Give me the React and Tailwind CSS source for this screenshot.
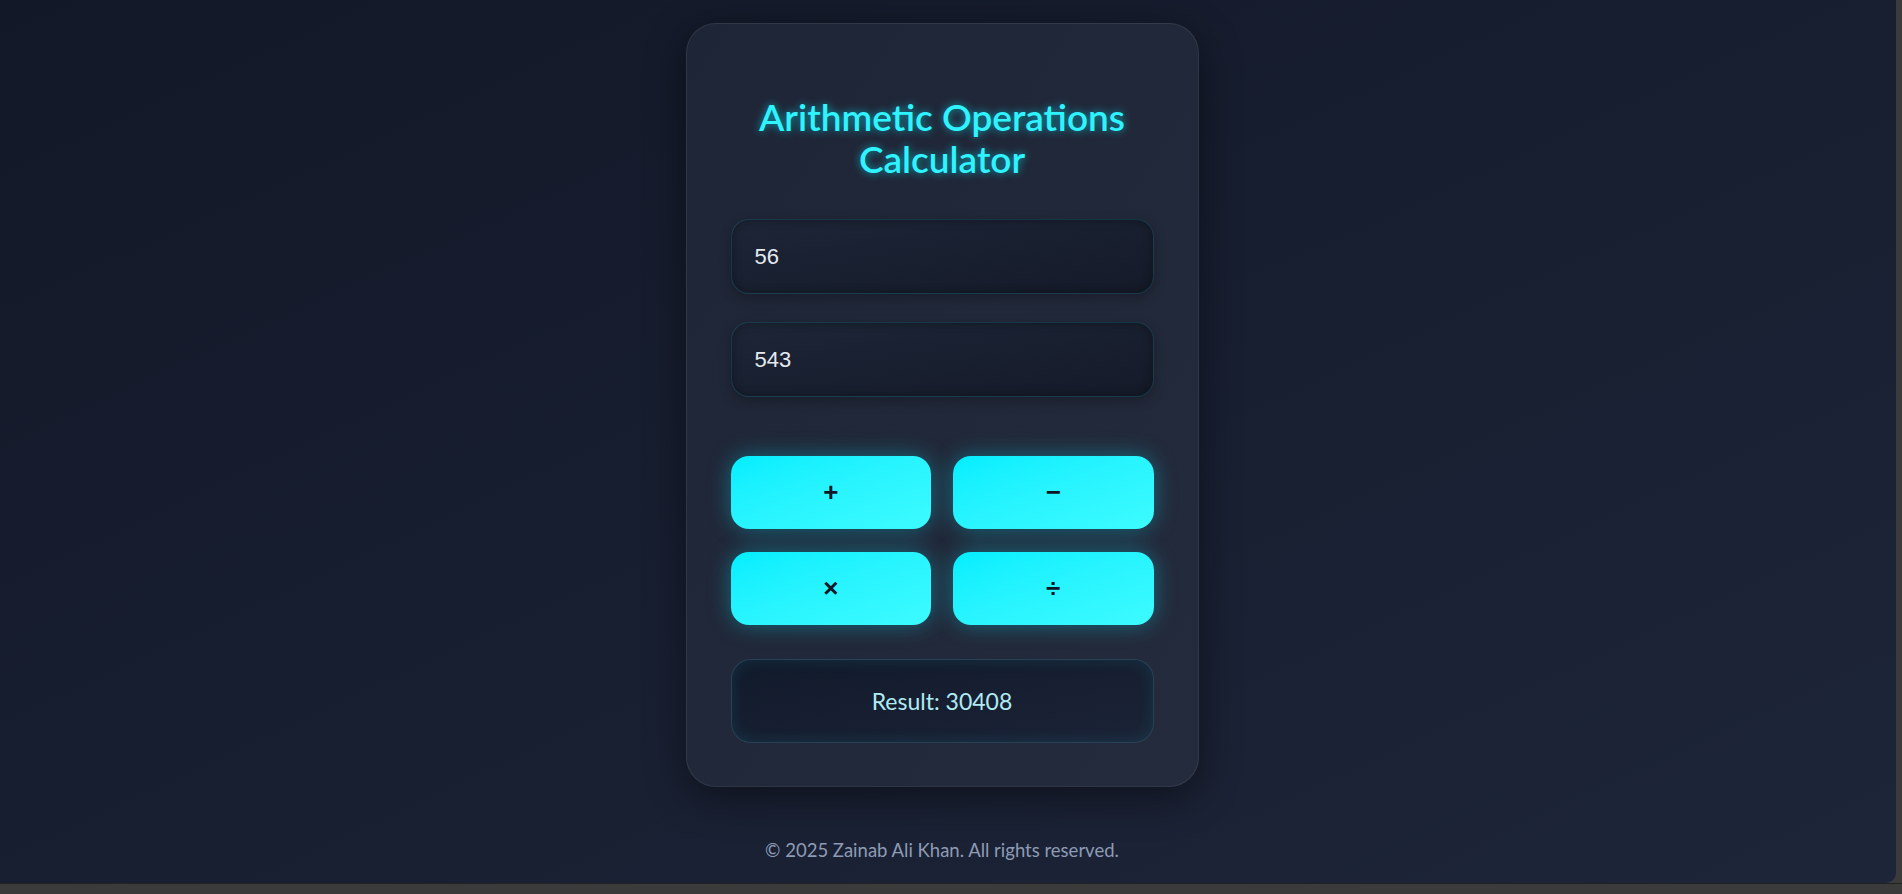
import React, { useState } from 'react';

const ops = [
  { key: 'add', label: '+', fn: (a, b) => a + b },
  { key: 'sub', label: '−', fn: (a, b) => a - b },
  { key: 'mul', label: '×', fn: (a, b) => a * b },
  { key: 'div', label: '÷', fn: (a, b) => (b === 0 ? 'Error' : a / b) },
];

function NumberField({ value, onChange }) {
  return (
    <input
      type="text"
      value={value}
      onChange={(e) => onChange(e.target.value)}
      className="w-full h-[75px] rounded-[18px] border border-[#22d3ee]/15 bg-gradient-to-br from-[#1d2537] to-[#141a28] pl-[23px] text-[22px] text-[#e5e9f0] font-['Liberation_Sans',Arial,sans-serif] outline-none shadow-[inset_0_0_10px_rgba(0,0,0,0.35),0_4px_12px_rgba(0,0,0,0.25)]"
    />
  );
}

export default function App() {
  const [a, setA] = useState('56');
  const [b, setB] = useState('543');
  const [result, setResult] = useState(30408);

  const run = (op) => {
    const x = parseFloat(a);
    const y = parseFloat(b);
    if (isNaN(x) || isNaN(y)) return setResult('Invalid');
    setResult(op.fn(x, y));
  };

  return (
    <div className="h-[894px] w-full bg-[#3b3b3b] overflow-hidden">
      <div className="h-[883px] w-[1896px] rounded-br-[10px] overflow-hidden bg-gradient-to-br from-[#121827] to-[#1d2539] font-['Lato','Noto_Sans',sans-serif]">
        <div className="flex flex-col items-center pr-[12px] pt-[23px]">
          <div className="w-[513px] h-[764px] rounded-[30px] border border-white/[0.07] bg-gradient-to-br from-[#1e2536] to-[#242b3c] px-[44px] pt-[72px] pb-[40px] shadow-[0_10px_40px_rgba(0,0,0,0.45)]">
            <h1 className="text-center text-[37px] leading-[42px] font-semibold text-[#2ff3ff] [text-shadow:0_0_8px_rgba(0,235,255,0.65)]">
              Arithmetic Operations
              <br />
              Calculator
            </h1>

            <div className="mt-[39px] flex flex-col gap-[28px]">
              <NumberField value={a} onChange={setA} />
              <NumberField value={b} onChange={setB} />
            </div>

            <div className="mt-[59px] grid grid-cols-2 gap-x-[22px] gap-y-[23px]">
              {ops.map((op) => (
                <button
                  key={op.key}
                  onClick={() => run(op)}
                  className="h-[73px] rounded-[18px] bg-gradient-to-br from-[#00eeff] to-[#3cfbff] text-[26px] font-bold text-[#0f1626] font-['Liberation_Sans',Arial,sans-serif] shadow-[0_0_22px_rgba(0,235,255,0.35)]"
                >
                  {op.label}
                </button>
              ))}
            </div>

            <div className="mt-[34px] h-[84px] rounded-[20px] border border-[#2c4a60]/80 bg-gradient-to-br from-[#111a2b] to-[#1b2336] flex items-center justify-center text-[23px] text-[#b0eaf3] shadow-[inset_0_0_16px_rgba(34,211,238,0.12)]">
              Result: {result}
            </div>
          </div>

          <p className="mt-[50px] text-[18.5px] leading-[27px] text-[#8e9bb4]">
            © 2025 Zainab Ali Khan. All rights reserved.
          </p>
        </div>
      </div>
      <div className="h-[1px] bg-[#222]" />
    </div>
  );
}
